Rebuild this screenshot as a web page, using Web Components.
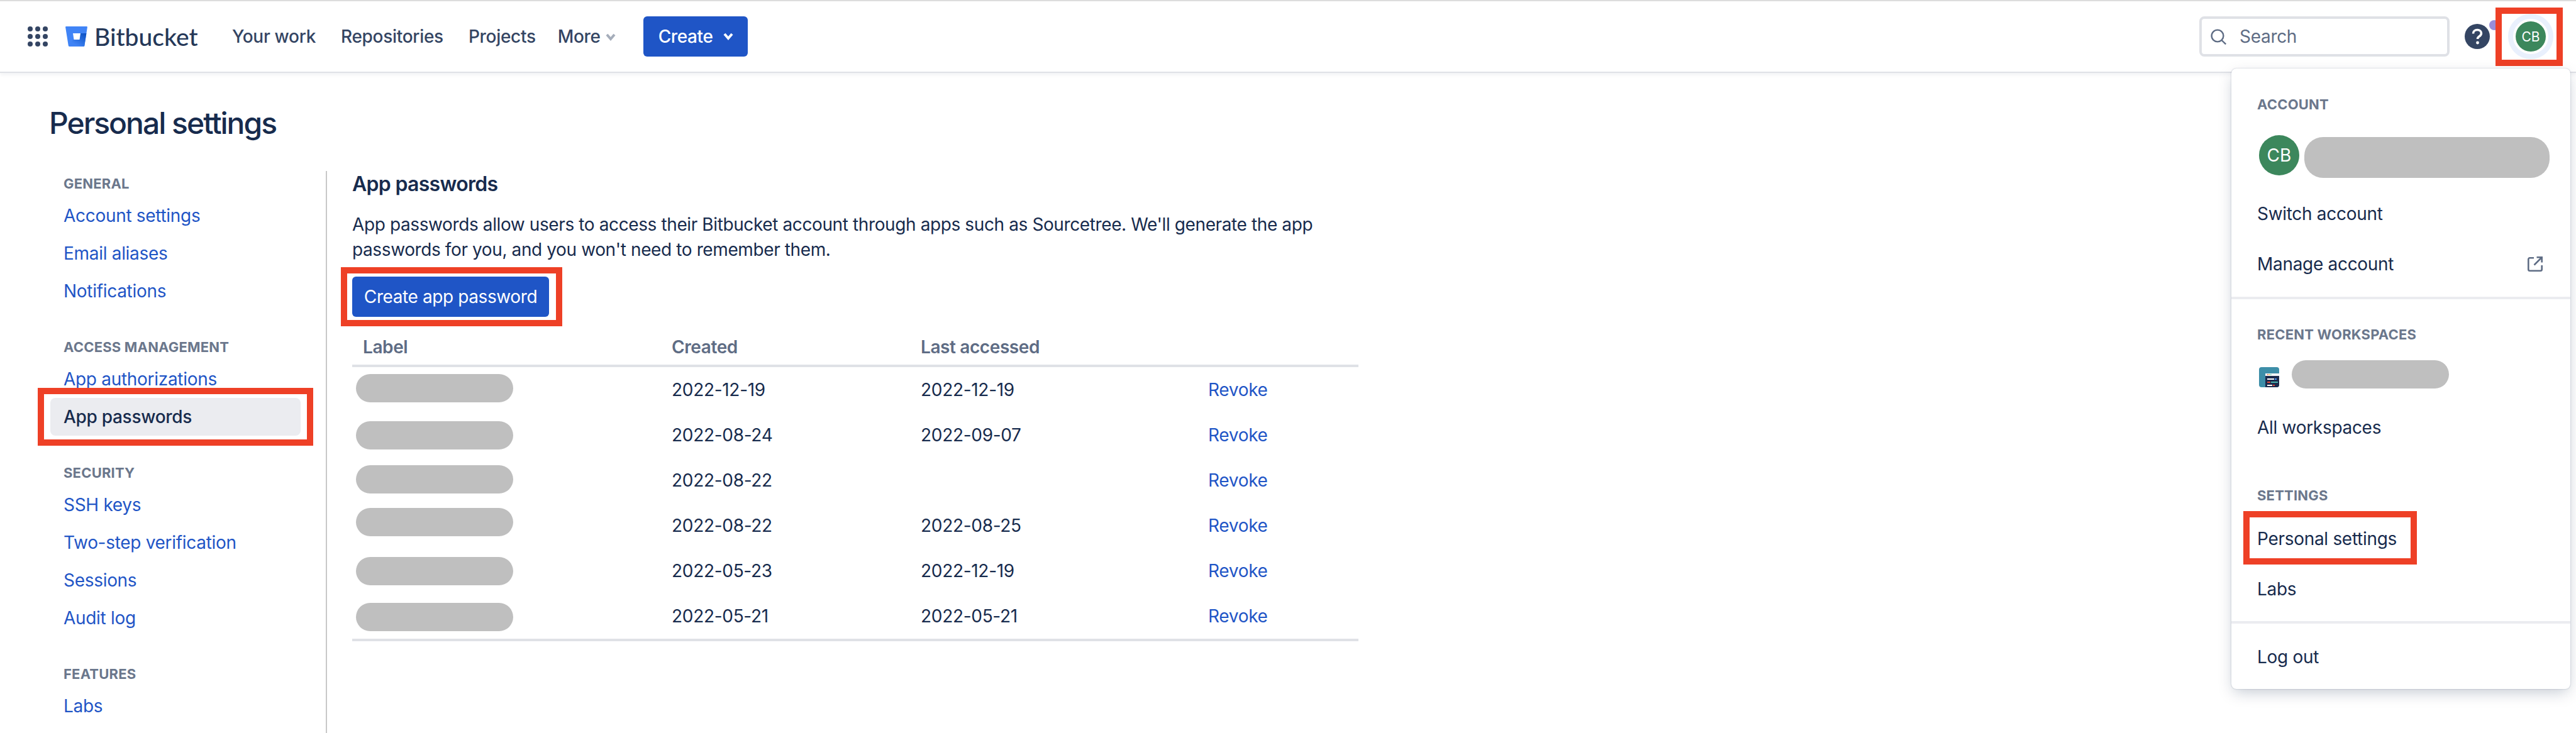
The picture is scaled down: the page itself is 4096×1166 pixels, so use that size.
<!DOCTYPE html>
<html>
<head>
<meta charset="utf-8">
<title>Personal settings</title>
<style>
  html, body { margin: 0; height: 100%; }
  body {
    height: 1166px;
    overflow: hidden;
    background: #fff;
    color: #172b4d;
    font-family: Inter, "Noto Sans", "Liberation Sans", sans-serif;
    font-size: 28px;
    line-height: 40px;
  }
</style>
</head>
<body>

<bb-topbar>
  <bb-nav-link>Your work</bb-nav-link>
  <bb-nav-link>Repositories</bb-nav-link>
  <bb-nav-link>Projects</bb-nav-link>
  <bb-nav-link more>More</bb-nav-link>
</bb-topbar>

<bb-account-menu></bb-account-menu>

<bb-page heading="Personal settings">
  <bb-sidebar slot="side">
    <bb-side-section heading="General">
      <bb-side-link>Account settings</bb-side-link>
      <bb-side-link>Email aliases</bb-side-link>
      <bb-side-link>Notifications</bb-side-link>
    </bb-side-section>
    <bb-side-section heading="Access management">
      <bb-side-link>App authorizations</bb-side-link>
      <bb-callout style="--t:-16px;--r:-20px;--b:-16px;--l:-20px;display:block">
        <bb-side-link active>App passwords</bb-side-link>
      </bb-callout>
    </bb-side-section>
    <bb-side-section heading="Security">
      <bb-side-link>SSH keys</bb-side-link>
      <bb-side-link>Two-step verification</bb-side-link>
      <bb-side-link>Sessions</bb-side-link>
      <bb-side-link>Audit log</bb-side-link>
    </bb-side-section>
    <bb-side-section heading="Features">
      <bb-side-link>Labs</bb-side-link>
    </bb-side-section>
  </bb-sidebar>

  <bb-app-passwords>
    <bb-password-row created="2022-12-19" accessed="2022-12-19" nudge="11"></bb-password-row>
    <bb-password-row created="2022-08-24" accessed="2022-09-07" nudge="14"></bb-password-row>
    <bb-password-row created="2022-08-22" accessed="" nudge="12"></bb-password-row>
    <bb-password-row created="2022-08-22" accessed="2022-08-25" nudge="8"></bb-password-row>
    <bb-password-row created="2022-05-23" accessed="2022-12-19" nudge="14"></bb-password-row>
    <bb-password-row created="2022-05-21" accessed="2022-05-21" nudge="15"></bb-password-row>
  </bb-app-passwords>
</bb-page>

<script>
// small base class, every element just hands over its shadow markup
class ShadowElement extends HTMLElement {
  render(html) {
    this.attachShadow({ mode: 'open' }).innerHTML = html;
  }
}

//---- grey bar that hides private text
customElements.define('bb-redacted', class extends ShadowElement {
  constructor() {
    super();
    this.render(`<style>
      :host { display: block; height: 45px; border-radius: 23px; background: #bfbfbf; flex: none; }
    </style>`);
  }
});

//---- red annotation frame drawn over what it wraps
customElements.define('bb-callout', class extends ShadowElement {
  constructor() {
    super();
    this.render(`<style>
      :host { display: inline-block; position: relative; }
      .frame {
        position: absolute;
        top: var(--t); right: var(--r); bottom: var(--b); left: var(--l);
        border: 10px solid #ee4026;
        pointer-events: none;
        z-index: 5;
      }
    </style><slot></slot><div class="frame"></div>`);
  }
});

customElements.define('bb-avatar', class extends ShadowElement {
  constructor() {
    super();
    const size = this.getAttribute('size') || 48;
    this.render(`<style>
      :host {
        display: flex; align-items: center; justify-content: center; flex: none;
        width: ${size}px; height: ${size}px; border-radius: 50%;
        background: #3c875c; color: #fff;
        font-size: ${Math.round(size * 0.44)}px; line-height: 1;
      }
    </style>CB`);
  }
});

customElements.define('bb-nav-link', class extends ShadowElement {
  constructor() {
    super();
    const chevron = this.hasAttribute('more')
      ? `<svg width="18" height="12" viewBox="0 0 18 12"><path d="M3 2l6 7 6-7" fill="none" stroke="#a5adba" stroke-width="4"/></svg>` : '';
    this.render(`<style>
      :host { display: flex; align-items: center; gap: 7px; color: #344563; font-weight: 500; letter-spacing: -.3px; }
      svg { margin-top: 2px; }
    </style><slot></slot>${chevron}`);
  }
});

customElements.define('bb-topbar', class extends ShadowElement {
  constructor() {
    super();
    let dots = '';
    for (let y = 0; y < 3; y++) {
      for (let x = 0; x < 3; x++) {
        dots += `<circle cx="${4 + x * 12}" cy="${4 + y * 12}" r="4"/>`;
      }
    }
    this.render(`<style>
      :host {
        display: flex; align-items: center; position: relative; z-index: 2;
        box-sizing: border-box; height: 116px;
        padding: 0 36px 0 44px;
        background: #fff;
        border-top: 2px solid #dcdcdc;
        border-bottom: 2px solid #dfe1e6;
        box-shadow: 0 3px 6px rgba(9, 30, 66, .06);
      }
      .logo { margin-left: 28px; }
      .word {
        margin-left: 11px; width: 160px; color: #253858;
        font: 500 39px/40px Lato, "Noto Sans", sans-serif;
      }
      nav { display: flex; gap: 40px; margin-left: 59px; }
      ::slotted(bb-nav-link:last-child) { margin-left: -5px; }
      .create {
        display: flex; align-items: center; gap: 16px; box-sizing: border-box;
        height: 64px; width: 166px; margin-left: 43px; padding-left: 24px;
        border-radius: 6px; background: #1f55c6; color: #fff; font-weight: 500;
        letter-spacing: -.4px;
      }
      .search {
        display: flex; align-items: center; gap: 20px; box-sizing: border-box;
        width: 398px; height: 64px; margin-left: auto; padding-left: 14px;
        border: 4px solid #dfe1e6; border-radius: 8px; color: #5e6c84; letter-spacing: -.3px;
      }
      .help { position: relative; width: 40px; height: 40px; margin-left: 24px; }
      .help i {
        position: absolute; left: 39px; top: -6px; width: 16px; height: 16px;
        border-radius: 50%; background: #998dd9; box-shadow: 0 0 0 3px #fff;
      }
      .ring {
        display: block; padding: 4px; border: 8px solid #e9f0fd; border-radius: 50%;
      }
      bb-callout { margin-left: 29px; }
    </style>
    <svg width="32" height="32" viewBox="0 0 32 32" fill="#344563">${dots}</svg>
    <svg class="logo" width="35" height="32" viewBox="0 0 35 32">
      <defs><linearGradient id="bk" x1="1" y1="0" x2="0.35" y2="0.85">
        <stop offset="0" stop-color="#0a4fc0"/><stop offset="1" stop-color="#3f83f5"/>
      </linearGradient></defs>
      <path d="M1.2 0h32.6c.7 0 1.2.6 1.1 1.3l-4.6 29.5c-.1.7-.6 1.2-1.3 1.2H6.2c-.7 0-1.3-.5-1.4-1.2L.1 1.3C0 .6.5 0 1.2 0z" fill="#4084f6"/>
      <path d="M33.4 11H23.5l-1.6 10H12l-6 11h23c.8 0 1.2-.5 1.3-1.2z" fill="url(#bk)"/>
      <path d="M12 11h12l-1.5 10H13.5z" fill="#fff"/>
    </svg>
    <span class="word">Bitbucket</span>
    <nav><slot></slot></nav>
    <div class="create">Create
      <svg width="18" height="14" viewBox="0 0 18 14"><path d="M3 3l6 7 6-7" fill="none" stroke="#fff" stroke-width="4"/></svg>
    </div>
    <div class="search">
      <svg width="26" height="25" viewBox="0 0 26 25" fill="none" stroke="#5e6c84" stroke-width="2.4"><circle cx="11" cy="11" r="9.4"/><path d="M17.6 18l6.6 6.4"/></svg>
      Search
    </div>
    <div class="help">
      <svg width="40" height="40" viewBox="0 0 40 40">
        <circle cx="20" cy="20" r="20" fill="#344563"/>
        <path d="M13.5 15.5c0-3.6 2.9-6 6.6-6 3.6 0 6.3 2.3 6.3 5.5 0 2.7-1.6 3.9-3.400 5.100-1.700 1.100-2.500 1.900-2.500 3.900" fill="none" stroke="#fff" stroke-width="3.600"/>
        <circle cx="20.500" cy="30" r="2.400" fill="#fff"/>
      </svg>
      <i></i>
    </div>
    <bb-callout style="--t:-10px;--r:-15px;--b:-11px;--l:-20px">
      <span class="ring"><bb-avatar size="48"></bb-avatar></span>
    </bb-callout>`);
  }
});

customElements.define('bb-menu-item', class extends ShadowElement {
  constructor() {
    super();
    this.render(`<style>
      :host {
        display: flex; align-items: center; justify-content: space-between;
        height: 80px; padding: 0 44px 0 41px; color: #172b4d; letter-spacing: -.3px;
      }
    </style><slot></slot><slot name="end"></slot>`);
  }
});

customElements.define('bb-menu-heading', class extends ShadowElement {
  constructor() {
    super();
    this.render(`<style>
      :host {
        display: block; padding-left: 41px; color: #6b778c;
        font-size: 22px; font-weight: 700; letter-spacing: .2px; line-height: 40px;
        text-transform: uppercase;
      }
    </style><slot></slot>`);
  }
});

customElements.define('bb-account-menu', class extends ShadowElement {
  constructor() {
    super();
    this.render(`<style>
      :host {
        display: block; position: absolute; z-index: 3;
        top: 109px; right: 9px; width: 539px; height: 987px;
        box-sizing: border-box; padding-top: 37px;
        background: #fff; border-radius: 8px;
        box-shadow: 0 8px 24px -4px rgba(9, 30, 66, .25), 0 0 2px rgba(9, 30, 66, .31);
      }
      hr { height: 4px; margin: 0; border: 0; background: #ebecf0; }
      .me { display: flex; gap: 8px; margin: 29px 33px 17px 44px; }
      .me bb-redacted { flex: 1; height: 65px; margin-top: 3px; border-radius: 30px; }
      .ws { display: flex; gap: 20px; margin: 21px 0 22px 44px; }
      .ws svg { margin-top: 11px; }
      .ws bb-redacted { width: 250px; }
    </style>
    <bb-menu-heading>Account</bb-menu-heading>
    <div class="me"><bb-avatar size="64"></bb-avatar><bb-redacted></bb-redacted></div>
    <bb-menu-item>Switch account</bb-menu-item>
    <bb-menu-item>Manage account
      <svg slot="end" width="24" height="24" viewBox="0 0 24 24" fill="none" stroke="#5e6c84" stroke-width="2.600">
        <path d="M10 2.300H3.500c-1.200 0-2.200 1-2.200 2.200v16c0 1.200 1 2.200 2.200 2.200h17c1.200 0 2.200-1 2.200-2.200V14"/>
        <path d="M10.500 13.500L22 2M14.500 1.300h8.200v8.200"/>
      </svg>
    </bb-menu-item>
    <hr style="margin-top:12px">
    <bb-menu-heading style="margin-top:36px">Recent workspaces</bb-menu-heading>
    <div class="ws">
      <svg width="32" height="32" viewBox="0 0 32 32">
        <rect width="32" height="32" rx="4" fill="#3d8ea8"/>
        <path d="M10 10h22v4H10z" fill="#f4f5f7"/>
        <path d="M10 14h22v14a4 4 0 0 1-4 4H10z" fill="#1c2b4d"/>
        <path d="M13 11h1.500v1.500H13z" fill="#e5493a"/><path d="M15.500 11H17v1.500h-1.500z" fill="#ffc400"/><path d="M18 11h1.500v1.500H18z" fill="#57d9a3"/>
        <path d="M13 18h11v2H13z" fill="#fff"/><path d="M25 18h3v2h-3z" fill="#4c9aff"/>
        <path d="M13 23h5v2h-5z" fill="#e5493a"/><path d="M19 23h11v2H19z" fill="#4bb3ad"/>
        <path d="M13 28h8v2h-8z" fill="#fff"/><path d="M22 28h3v2h-3z" fill="#e5493a"/>
      </svg>
      <bb-redacted></bb-redacted>
    </div>
    <bb-menu-item>All workspaces</bb-menu-item>
    <bb-menu-heading style="margin:48px 0 9px">Settings</bb-menu-heading>
    <bb-menu-item>
      <bb-callout style="--t:-24px;--r:-32px;--b:-21px;--l:-22px">Personal settings</bb-callout>
    </bb-menu-item>
    <bb-menu-item>Labs</bb-menu-item>
    <hr style="margin:11px 0 13px">
    <bb-menu-item>Log out</bb-menu-item>`);
  }
});

customElements.define('bb-page', class extends ShadowElement {
  constructor() {
    super();
    this.render(`<style>
      :host { display: block; padding: 52px 0 0 60px; }
      h1 {
        margin: 0 0 48px 18px; color: #172b4d;
        font-size: 48px; font-weight: 500; line-height: 56px; letter-spacing: -2px;
      }
      .cols { display: flex; height: 894px; }
    </style>
    <h1>${this.getAttribute('heading')}</h1>
    <div class="cols"><slot name="side"></slot><slot></slot></div>`);
  }
});

customElements.define('bb-sidebar', class extends ShadowElement {
  constructor() {
    super();
    this.render(`<style>
      :host {
        display: flex; flex-direction: column; gap: 39px; flex: none;
        box-sizing: content-box; width: 398px; padding-left: 20px; padding-right: 40px;
        border-right: 2px solid #c8c8c8;
      }
    </style><slot></slot>`);
  }
});

customElements.define('bb-side-section', class extends ShadowElement {
  constructor() {
    super();
    this.render(`<style>
      :host { display: block; }
      h4 {
        margin: 0; padding: 0 21px 1px; color: #6b778c;
        font-size: 22px; font-weight: 700; line-height: 40px; letter-spacing: .2px;
        text-transform: uppercase;
      }
    </style>
    <h4>${this.getAttribute('heading')}</h4><slot></slot>`);
  }
});

customElements.define('bb-side-link', class extends ShadowElement {
  constructor() {
    super();
    this.render(`<style>
      :host {
        display: flex; align-items: center; box-sizing: border-box; height: 60px;
        padding: 0 21px; border-radius: 8px; color: #1f55c6; letter-spacing: -.3px;
      }
      :host([active]) { background: #ebecf0; color: #172b4d; font-weight: 500; }
    </style><slot></slot>`);
  }
});

customElements.define('bb-password-row', class extends ShadowElement {
  constructor() {
    super();
    this.render(`<style>
      :host {
        display: grid; grid-template-columns: 508px 396px 457px 239px;
        height: 72px; letter-spacing: -.3px;
      }
      bb-redacted { width: 250px; margin: ${this.getAttribute('nudge')}px 0 0 6px; }
      span { align-self: center; }
      .revoke { color: #1f55c6; }
    </style>
    <div><bb-redacted></bb-redacted></div>
    <span>${this.getAttribute('created')}</span>
    <span>${this.getAttribute('accessed')}</span>
    <span class="revoke">Revoke</span>`);
  }
});

customElements.define('bb-app-passwords', class extends ShadowElement {
  constructor() {
    super();
    this.render(`<style>
      :host { display: block; width: 1600px; margin-left: 40px; padding-top: 1px; }
      h3 { margin: 0; color: #172b4d; font-size: 32px; font-weight: 600; line-height: 40px; letter-spacing: -.7px; }
      p { margin: 24px 0 23px; width: 1640px; letter-spacing: -.39px; }
      button {
        display: block; box-sizing: border-box; width: 313px; height: 64px; padding: 0; border: 0;
        border-radius: 6px; background: #1f55c6; color: #fff;
        font: inherit; font-weight: 400; letter-spacing: -.4px;
      }
      .head {
        display: grid; grid-template-columns: 508px 396px 457px 239px;
        height: 76px; padding-top: 0; border-bottom: 4px solid #dfe1e6;
        box-sizing: content-box; color: #5e6c84; font-weight: 600; letter-spacing: -.4px;
      }
      .head span { margin-top: 28px; }
      .head span:first-child { padding-left: 17px; }
      .rows { border-bottom: 4px solid #dfe1e6; }
    </style>
    <h3>App passwords</h3>
    <p>App passwords allow users to access their Bitbucket account through apps such as Sourcetree. We'll generate the app<br>passwords for you, and you won't need to remember them.</p>
    <bb-callout style="--t:-15px;--r:-21px;--b:-15px;--l:-18px;display:block;width:313px"><button>Create app password</button></bb-callout>
    <div class="head"><span>Label</span><span>Created</span><span>Last accessed</span><span></span></div>
    <div class="rows"><slot></slot></div>`);
  }
});
</script>
</body>
</html>
